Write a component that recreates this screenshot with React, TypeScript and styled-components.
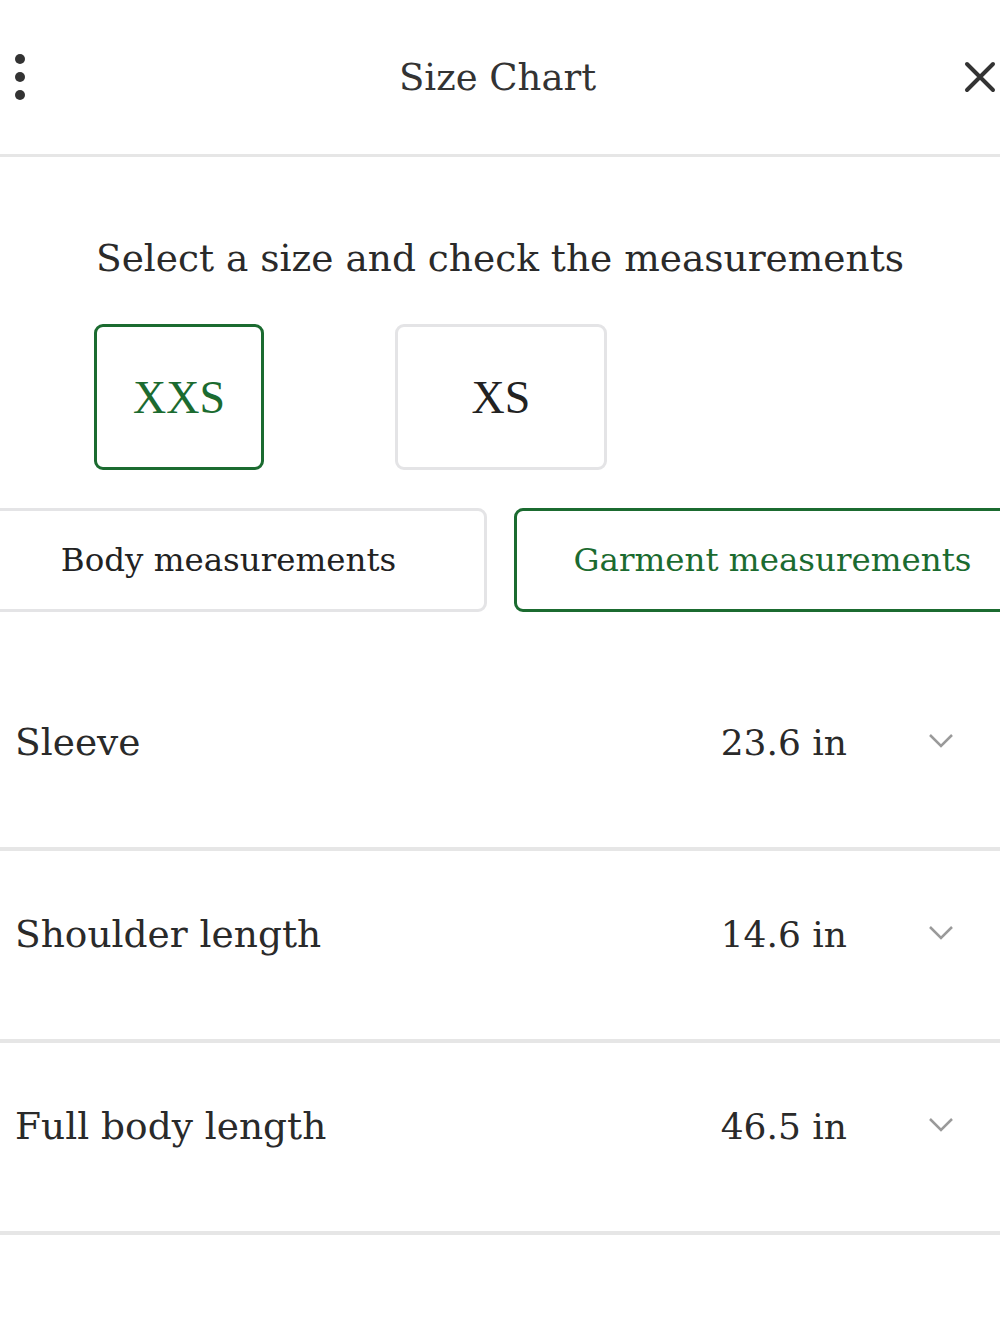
import styled, { createGlobalStyle } from 'styled-components';
import { useState } from 'react';

const GlobalStyle = createGlobalStyle`
  html, body {
    margin: 0;
    padding: 0;
    background: #ffffff;
    overflow-x: hidden;
  }
  body {
    font-family: 'DejaVu Serif', 'Liberation Serif', serif;
    color: #222222;
  }
`;

const GREEN = '#1b6b30';

const sizes = ['XXS', 'XS'];

const rows = [
  { label: 'Sleeve', value: '23.6 in' },
  { label: 'Shoulder length', value: '14.6 in' },
  { label: 'Full body length', value: '46.5 in' },
];

export default function App() {
  const [size, setSize] = useState('XXS');
  const [tab, setTab] = useState('garment');

  return (
    <>
      <GlobalStyle />
      <Sheet>
        <Header>
          <IconButton aria-label="More">
            <svg width="14" height="48" viewBox="0 0 14 48">
              <circle cx="7" cy="6" r="5" fill="#333" />
              <circle cx="7" cy="24" r="5" fill="#333" />
              <circle cx="7" cy="42" r="5" fill="#333" />
            </svg>
          </IconButton>
          <Title>Size Chart</Title>
          <IconButton aria-label="Close">
            <svg width="32" height="32" viewBox="0 0 32 32">
              <path d="M3 3 L29 29 M29 3 L3 29" stroke="#333" strokeWidth="4" strokeLinecap="round" />
            </svg>
          </IconButton>
        </Header>

        <Intro>Select a size and check the measurements</Intro>

        <SizeRow>
          {sizes.map((s) => (
            <SizeButton key={s} $active={size === s} $wide={s !== 'XXS'} onClick={() => setSize(s)}>
              {s}
            </SizeButton>
          ))}
        </SizeRow>

        <Tabs>
          <Tab $active={tab === 'body'} onClick={() => setTab('body')}>
            Body measurements
          </Tab>
          <Tab $active={tab === 'garment'} onClick={() => setTab('garment')}>
            Garment measurements
          </Tab>
        </Tabs>

        <List>
          {rows.map((r) => (
            <Row key={r.label}>
              <Label>{r.label}</Label>
              <Value>{r.value}</Value>
              <Chevron width="26" height="16" viewBox="0 0 26 16">
                <path d="M2 2 L13 13 L24 2" fill="none" stroke="#9a9a9a" strokeWidth="2.5" />
              </Chevron>
            </Row>
          ))}
        </List>
      </Sheet>
    </>
  );
}

const Sheet = styled.div`
  width: 1000px;
  min-height: 1333px;
  overflow: hidden;
`;

const Header = styled.header`
  height: 157px;
  display: flex;
  align-items: center;
  justify-content: space-between;
  padding: 0 4px 0 13px;
  box-sizing: border-box;
  border-bottom: 3px solid #e6e6e6;
`;

const IconButton = styled.button`
  background: none;
  border: none;
  padding: 0;
  display: flex;
  align-items: center;
  cursor: pointer;
`;

const Title = styled.h1`
  margin: 0 0 0 4px;
  font-size: 37px;
  font-weight: 400;
  color: #333;
`;

const Intro = styled.p`
  margin: 76px 0 0;
  text-align: center;
  font-size: 37.5px;
  line-height: 50px;
  color: #2a2a2a;
`;

const SizeRow = styled.div`
  display: flex;
  gap: 131px;
  padding-left: 94px;
  margin-top: 41px;
`;

const SizeButton = styled.button<{ $active: boolean; $wide: boolean }>`
  width: ${(p) => (p.$wide ? '212px' : '170px')};
  height: 146px;
  box-sizing: border-box;
  border-radius: 9px;
  background: #fff;
  border: ${(p) => (p.$active ? `3px solid ${GREEN}` : '3px solid #e4e4e6')};
  color: ${(p) => (p.$active ? GREEN : '#222')};
  font-family: 'Liberation Serif', serif;
  font-size: 46px;
  cursor: pointer;
`;

/* the tab pair is a bit wider than the sheet and bleeds off both edges */
const Tabs = styled.div`
  display: grid;
  grid-template-columns: 517px 517px;
  gap: 27px;
  margin: 38px 0 0 -30px;
`;

const Tab = styled.button<{ $active: boolean }>`
  height: 104px;
  box-sizing: border-box;
  border-radius: 9px;
  background: #fff;
  border: ${(p) => (p.$active ? `3px solid ${GREEN}` : '3px solid #e4e4e6')};
  color: ${(p) => (p.$active ? GREEN : '#222')};
  font-family: 'DejaVu Serif', serif;
  font-size: 32.5px;
  cursor: pointer;
`;

const List = styled.div`
  margin-top: 47px;
`;

const Row = styled.div`
  height: 166px;
  display: flex;
  align-items: center;
  padding: 0 46px 22px 15px;
  border-bottom: 4px solid #e6e6e6;
`;

const Label = styled.span`
  flex: 1;
  font-size: 37.5px;
  color: #2a2a2a;
`;

const Value = styled.span`
  font-size: 36px;
  color: #2a2a2a;
  margin-right: 81px;
`;

const Chevron = styled.svg`
  margin-top: -2px;
`;
